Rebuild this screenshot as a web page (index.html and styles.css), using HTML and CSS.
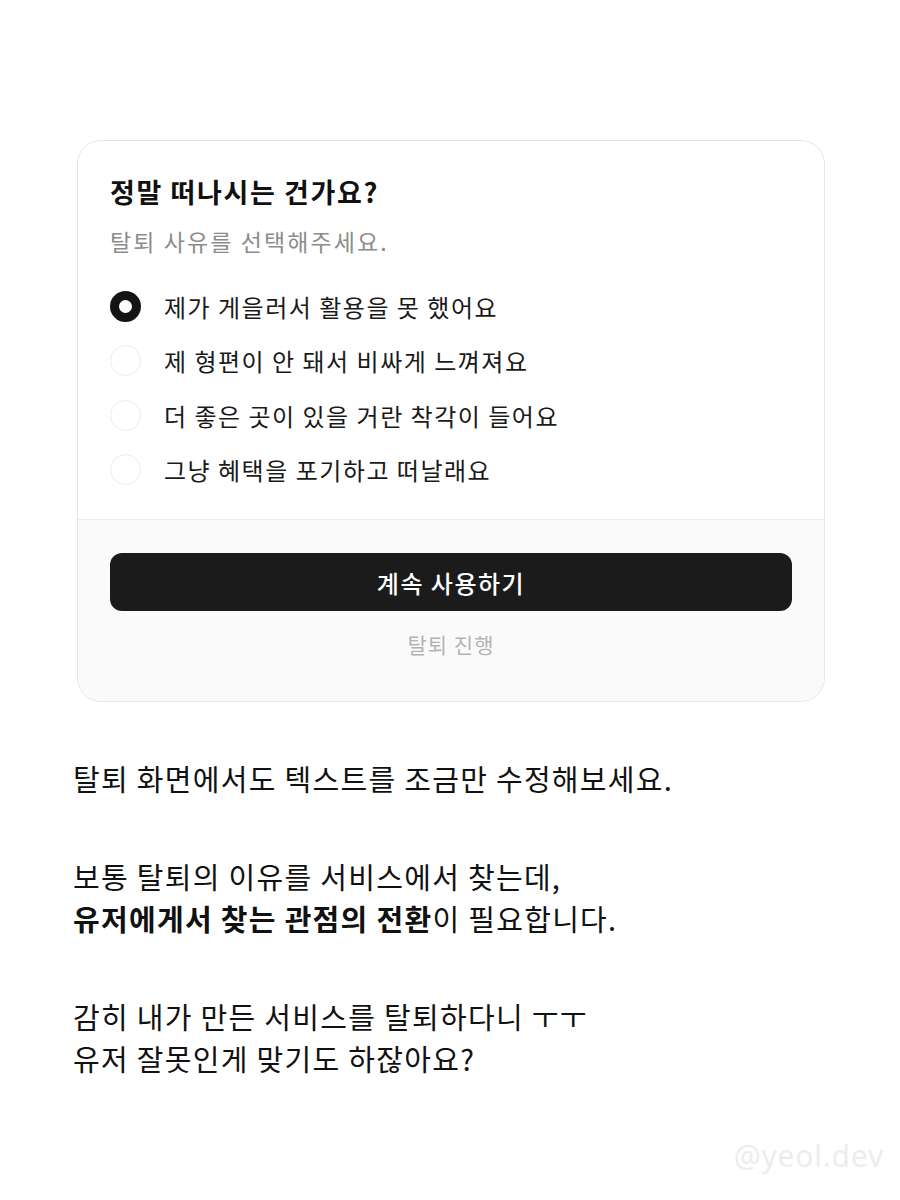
FILE: index.html
```html
<html>
  <head>
    <title>탈퇴 화면</title>
    <link rel="stylesheet" href="styles.css">
  </head>
  <body>
    <div class="page">
      <div class="card">
        <div class="card-top">
          <h3 class="title">정말 떠나시는 건가요?</h3>
          <p class="subtitle">탈퇴 사유를 선택해주세요.</p>
          <ul class="options">
            <li class="option selected"><span class="radio"></span>제가 게을러서 활용을 못 했어요</li>
            <li class="option"><span class="radio"></span>제 형편이 안 돼서 비싸게 느껴져요</li>
            <li class="option"><span class="radio"></span>더 좋은 곳이 있을 거란 착각이 들어요</li>
            <li class="option"><span class="radio"></span>그냥 혜택을 포기하고 떠날래요</li>
          </ul>
        </div>
        <div class="card-bottom">
          <button class="keep">계속 사용하기</button>
          <div class="leave">탈퇴 진행</div>
        </div>
      </div>

      <div class="copy">
        <p>탈퇴 화면에서도 텍스트를 조금만 수정해보세요.</p>
        <p>보통 탈퇴의 이유를 서비스에서 찾는데,<br><b>유저에게서 찾는 관점의 전환</b>이 필요합니다.</p>
        <p>감히 내가 만든 서비스를 탈퇴하다니 ㅜㅜ<br>유저 잘못인게 맞기도 하잖아요?</p>
      </div>

      <div class="watermark">@yeol.dev</div>
    </div>
  </body>
</html>
```

FILE: styles.css
```css
body {
  margin: 0;
  background: #fff;
  font-family: "Noto Sans CJK KR", "Noto Sans", sans-serif;
  color: #111;
}

.page {
  padding: 140px 75px 0 77px;
}

.card {
  border: 1px solid #e6e6e6;
  border-radius: 24px;
  overflow: hidden;
  background: #fff;
}

.card-top {
  padding: 34px 32px 22px;
}

.title {
  margin: 0;
  font-size: 27px;
  line-height: 34px;
  font-weight: 700;
  letter-spacing: 1.6px;
  color: #111;
}

.subtitle {
  margin: 17px 0 0;
  font-size: 23px;
  line-height: 30px;
  letter-spacing: 2.1px;
  color: #8c8c8c;
}

.options {
  list-style: none;
  margin: 23px 0 0;
  padding: 0;
}

.option {
  display: flex;
  align-items: center;
  gap: 23px;
  height: 54.5px;
  font-size: 24px;
  letter-spacing: 1.5px;
  color: #1a1a1a;
}

.radio {
  width: 31px;
  height: 31px;
  border-radius: 50%;
  border: 1.5px solid #ebebeb;
  box-sizing: border-box;
  flex: none;
}

.selected .radio {
  border: 9.5px solid #141414;
}

.card-bottom {
  background: #fafafa;
  border-top: 1px solid #ececec;
  padding: 33px 32px 42px;
  text-align: center;
}

.keep {
  display: block;
  width: 100%;
  height: 58px;
  border: none;
  border-radius: 12px;
  background: #1b1b1b;
  color: #fff;
  font-family: inherit;
  font-size: 24px;
  font-weight: 500;
  letter-spacing: 1.5px;
  cursor: pointer;
}

.leave {
  margin-top: 18px;
  font-size: 21px;
  line-height: 30px;
  letter-spacing: 1px;
  color: #b4b4b4;
}

.copy {
  margin-top: 55px;
  margin-left: -4px;
}

.copy p {
  margin: 0 0 56px;
  font-size: 29px;
  line-height: 42px;
  letter-spacing: 1.3px;
  color: #111;
}

.copy b {
  font-weight: 700;
}

.watermark {
  text-align: right;
  margin-top: 46px;
  margin-right: -59px;
  font-family: "Noto Sans", sans-serif;
  font-size: 30px;
  letter-spacing: 0.8px;
  color: #ededed;
}
```
